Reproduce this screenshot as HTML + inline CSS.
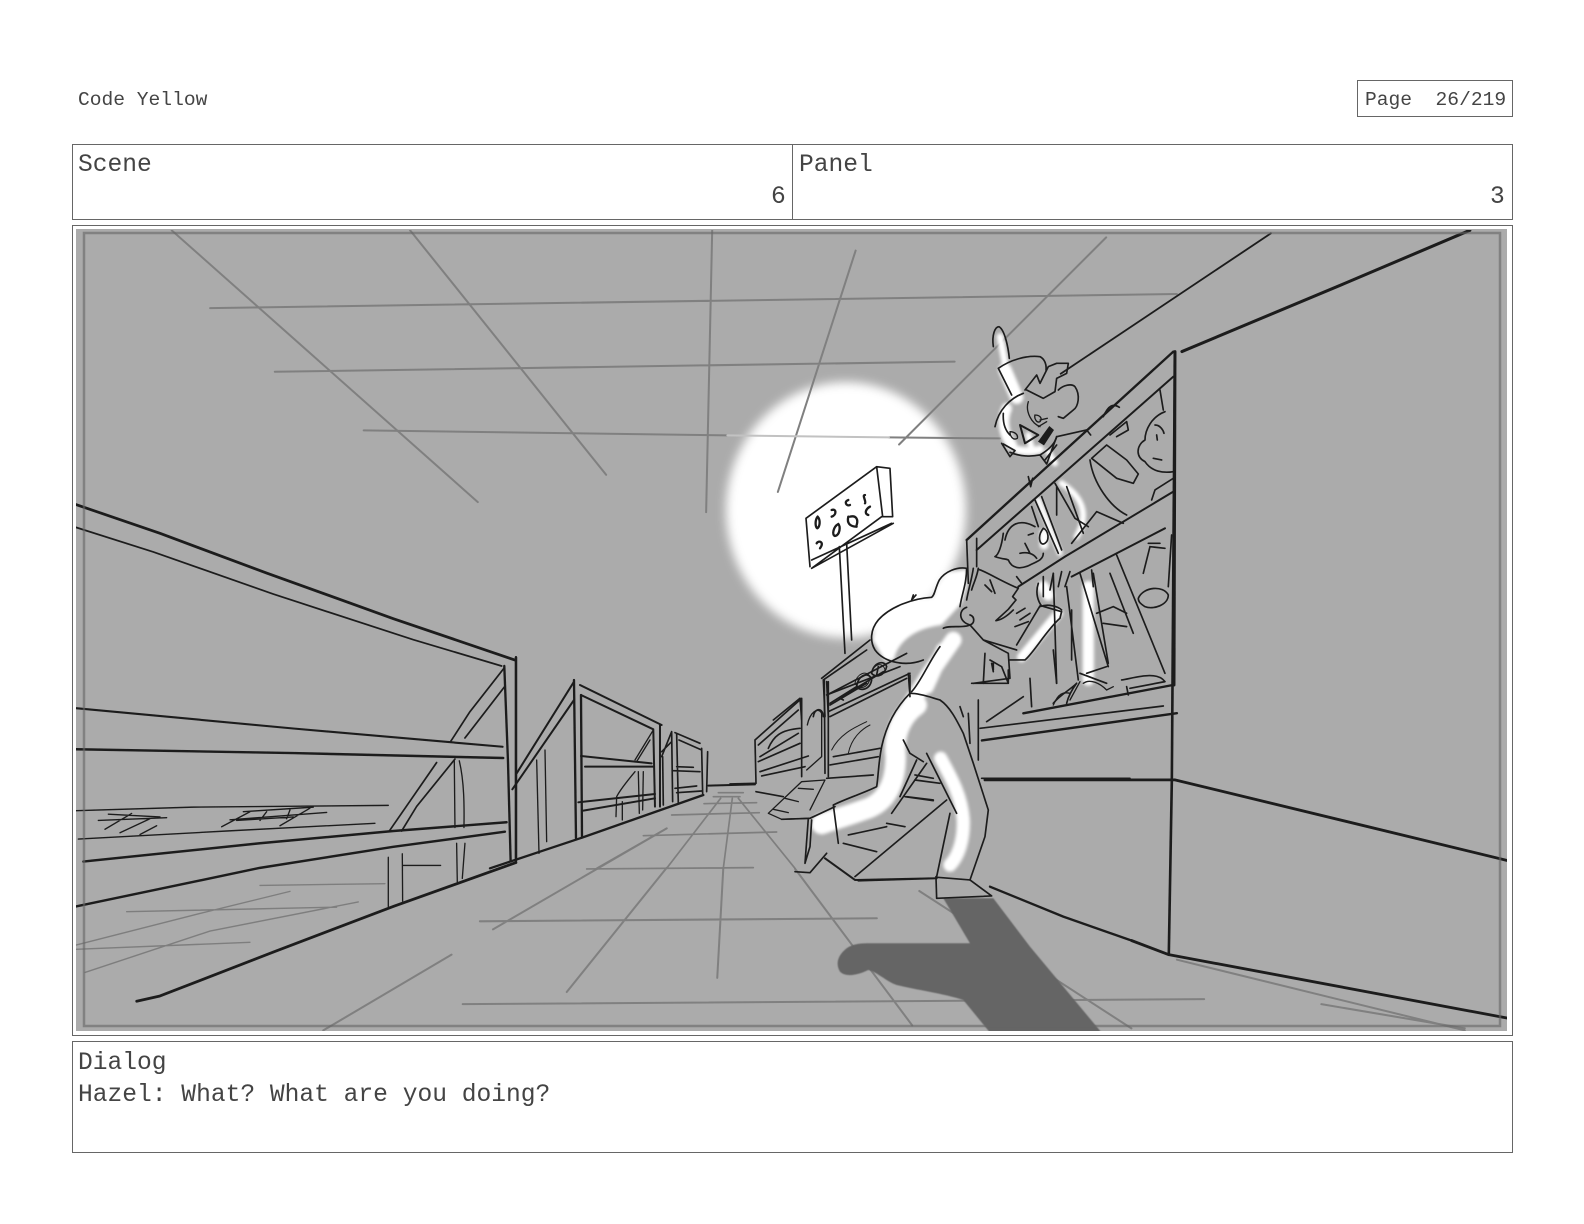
<!DOCTYPE html>
<html>
<head>
<meta charset="utf-8">
<style>
html,body{margin:0;padding:0;background:#fff;width:1584px;height:1224px;overflow:hidden}
body{position:relative;font-family:"Liberation Mono",monospace;color:#444}
.b{position:absolute;border:1.5px solid #666;box-sizing:border-box}
.t{position:absolute;white-space:pre;line-height:1;color:#444}
.s{font-size:19.6px}
.l{font-size:24.6px}
svg{position:absolute;left:0;top:0}
.k{fill:none;stroke:#1d1d1d;stroke-linecap:round;stroke-linejoin:round;stroke-width:5}
.g{fill:none;stroke:#7e7e7e;stroke-linecap:round;stroke-width:5}
.w{fill:none;stroke:#fff;stroke-linecap:round;stroke-linejoin:round}
</style>
</head>
<body>
<div class="t s" style="left:78px;top:91px">Code Yellow</div>
<div class="b" style="left:1357px;top:80px;width:156px;height:37px"></div>
<div class="t s" style="left:1365px;top:91px">Page  26/219</div>

<div class="b" style="left:72px;top:144px;width:1441px;height:76px"></div>
<div class="b" style="left:791.5px;top:144px;width:1.5px;height:76px;border-width:0 0 0 1.5px"></div>
<div class="t l" style="left:78px;top:154px">Scene</div>
<div class="t l" style="left:771px;top:186px">6</div>
<div class="t l" style="left:799px;top:154px">Panel</div>
<div class="t l" style="left:1490px;top:186px">3</div>

<div class="b" style="left:72px;top:225px;width:1441px;height:811px"></div>

<svg width="1584" height="1224" viewBox="0 0 1584 1224">
<defs>
<clipPath id="c"><rect x="76" y="229" width="1431" height="802"/></clipPath>
<filter id="bl" x="-20%" y="-20%" width="140%" height="140%"><feGaussianBlur stdDeviation="5"/></filter>
<filter id="bs" x="-20%" y="-20%" width="140%" height="140%"><feGaussianBlur stdDeviation="1.6"/></filter>
<filter id="bw" x="-30%" y="-30%" width="160%" height="160%"><feGaussianBlur stdDeviation="5"/></filter>
<filter id="sf" x="0" y="0" width="100%" height="100%"><feGaussianBlur stdDeviation=".35"/></filter>
</defs>
<rect x="76" y="229" width="1431" height="802" fill="#ababab"/>
<g clip-path="url(#c)">
<ellipse cx="846" cy="510" rx="120" ry="128" fill="#fff" filter="url(#bl)"/>

<g filter="url(#sf)">
<!-- ceiling + far floor -->
<g transform="scale(1.0102)" style="fill:none;stroke:#808080;stroke-width:2;stroke-linecap:round">
<path d="M170 228L473 497M406 228L600 470M705 228L699 507M847 248L770 487M1095 235L890 440M208 305L1165 291M272 368L945 358"/>
<path d="M360 426L720 431"/>
<path d="M880 433L990 434"/>
<path stroke="#c2c2c2" d="M720 431L880 433"/>
<path d="M475 912L868 909M458 994L1192 989M320 1020L447 945M488 920L660 820M716 859L710 968M660 859L561 982M787 860L903 1015M1165 950L1450 1020M1308 994L1450 1018M910 882L1120 1018"/>
</g>

<!-- right wall -->
<g transform="scale(1.0102)" style="fill:none;stroke:#1d1d1d;stroke-linecap:round;stroke-width:2.4">
<path stroke-width="3" d="M1455 228L1330 281L1170 348"/>
<path stroke-width="1.8" d="M1258 231L1050 370"/>
<path stroke-width="2.6" d="M1163 349L1160 772L1157 945"/>
<path stroke-width="2.8" d="M1163 772L1493 852M1157 945L1493 1008M975 772L1163 772M1120 931L1157 945"/>
<path d="M972 733L1165 706"/>
</g>

<!-- left foreground shelf -->
<g transform="translate(60 480) scale(.3333 .351)">
<path class="k" style="stroke-width:8" d="M48 70L300 152L620 265L1000 395L1365 513"/>
<path class="k" d="M48 135L280 205L640 325L1060 455L1325 530"/>
<path class="k" style="stroke-width:7" d="M1368 505L1368 1090M1333 530L1344 800L1352 1085"/>
<path class="k" style="stroke-width:6" d="M48 650L700 708L1328 760"/>
<path class="k" style="stroke-width:7" d="M48 767L700 778L1330 792"/>
<path class="k" d="M1333 535L1230 660L1172 745M1333 590L1215 735M1185 795L1070 930L1025 1000M1130 805L1050 915L988 1000"/>
<path class="k" style="stroke-width:4" d="M48 942L400 932L985 927M55 1023L500 1000L945 978"/>
<path class="k" style="stroke-width:7" d="M70 1087L600 1035L1000 1000L1340 975"/>
<path class="k" style="stroke-width:7" d="M48 1215L600 1105L1000 1045L1335 1002"/>
<path class="k" style="stroke-width:8" d="M230 1485L300 1470L640 1345L1000 1215L1368 1090"/>
<path class="k" style="stroke-width:4" d="M1183 800L1185 990M1198 800C1213 860 1213 930 1212 990M1190 1035L1192 1145M1215 1035L1207 1135M985 1075L985 1215M1027 1065L1028 1200M1030 1098L1142 1098"/>
<path class="k" style="stroke-width:4" d="M115 970L320 962M145 952L300 960M135 995L215 950M180 1005L270 965M240 1010L290 985M485 988L570 945M510 968L800 947M530 970L700 960M550 945L760 932M660 985L750 935M600 970L620 945M680 965L690 940"/>
<path class="g" style="stroke-width:4" d="M600 1155L975 1150M200 1230L830 1217M48 1325L420 1235L690 1172M75 1403L450 1285L895 1202M48 1337L570 1317"/>
</g>

<!-- distant shelves -->
<g transform="translate(480 650) scale(.3333)">
<path class="k" style="stroke-width:7" d="M108 22L108 630"/>
<path class="k" style="stroke-width:7" d="M282 90L288 565M303 135L306 560"/>
<path class="k" style="stroke-width:6" d="M300 105L545 225M303 135L520 238M282 95L110 370M282 150L97 418M540 225L540 470M520 240L525 470"/>
<path class="k" style="stroke-width:6" d="M303 318L515 340M315 350L520 350M295 457L525 432M310 482L525 445"/>
<path class="k" style="stroke-width:4" d="M520 240L465 330M510 270L470 335M465 365C440 395 420 420 410 440L408 500M427 455L427 510M475 365L478 490M490 365L488 480M170 330L177 610M195 300L200 575"/>
<path class="k" style="stroke-width:7" d="M30 655L300 565L670 435"/>
<path class="k" d="M575 245L545 320M575 275L545 305M585 248L660 280M597 270L665 300M575 245L578 455M590 250L595 460M665 295L668 430M683 305L680 425M580 362L660 365M590 350L640 352M585 415L650 408M590 428L665 423M548 320L550 465"/>
<path class="k" style="stroke-width:6" d="M685 407L825 403"/>
<path class="g" style="stroke-width:5" d="M715 428L790 428M700 440L780 440M672 461L830 458M575 495L838 488M490 557L890 546M320 657L820 653M722 445L560 655M757 445L730 655M775 445L945 655M560 535L350 655"/>
</g>

<!-- shadow -->
<g transform="translate(730 650) scale(.3333)">
<path fill="#656565" filter="url(#bs)" d="M640 745L790 745L900 890L1125 1160L790 1160L700 1050C640 1030 560 1020 500 1005C470 995 440 965 415 960C390 972 350 985 330 965C315 940 325 915 350 895C370 880 400 880 420 880L720 880Z"/>
</g>

<!-- white highlights, soft -->
<g filter="url(#bs)">
<g transform="translate(730 650) scale(.3333)">
<path class="w" style="stroke-width:62" d="M560 165C510 200 490 260 497 320C497 400 470 460 400 480C360 495 320 505 275 522"/>
<path class="w" style="stroke-width:40" d="M632 325C665 385 695 440 700 510C702 570 685 620 660 645"/>
<path class="w" style="stroke-width:44" d="M640 0L590 110"/>
</g>
<g transform="translate(700 320) scale(.3333)">
<path fill="#fff" d="M800 748L740 758L712 800L700 832L600 852L535 900L518 960L555 1022L582 1020C590 970 640 925 725 915L785 850L800 800Z"/>
<path class="w" style="stroke-width:34" d="M1030 800L1045 825"/>
<path class="w" style="stroke-width:28" d="M1075 880L965 1012"/>
<path class="w" style="stroke-width:50" d="M760 960L690 1060L610 1190"/>
<path class="w" style="stroke-width:34" d="M1165 800L1165 1080"/>
</g>
<g transform="translate(960 320) scale(.3333)">
<path class="w" style="stroke-width:20" d="M120 50L135 130"/>
<path class="w" style="stroke-width:40" d="M135 150L170 232"/>
<path class="w" style="stroke-width:32" d="M140 265C125 300 130 340 155 375"/>
<path class="w" style="stroke-width:24" d="M175 390C200 395 220 395 240 388"/>
<path class="w" style="stroke-width:18" d="M205 345L215 385"/>
<path class="w" style="stroke-width:18" d="M305 490C365 530 390 580 350 650"/>
<path class="w" style="stroke-width:16" d="M235 540L300 700"/>
<path class="w" style="stroke-width:26" d="M252 640L252 675"/>
<path class="w" style="stroke-width:18" d="M265 395L285 430"/>
</g>
</g>

<!-- Hazel lower body + right shelves -->
<g transform="translate(730 650) scale(.3333)">
<path class="k" d="M75 270L215 145L215 380M75 270L78 400M85 285L205 180M90 320L205 250M115 295C130 260 150 240 210 235M90 365L235 318M95 378L225 350M85 335L210 280"/>
<path class="k" style="stroke-width:4" d="M232 225C240 185 265 170 275 190L275 320L230 360"/>
<path class="k" d="M280 90L410 0M295 95L295 380M283 90L285 370M300 130L530 10M300 165L410 100M300 200L530 85M335 140L460 65"/>
<path class="k" style="stroke-width:3" d="M375 100C380 70 410 60 420 80C420 110 390 125 375 100M425 70C430 40 460 35 465 60C460 80 435 85 425 70M305 300C330 250 380 230 410 215M355 310C365 260 400 235 420 225"/>
<path class="k" d="M310 320L450 295M300 345L445 320M290 385L430 375M555 390L630 400M530 440L610 450"/>
<path class="k" style="stroke-width:5" d="M0 402L75 400M78 425L160 440M755 385L1200 385"/>
<path class="k" style="stroke-width:4" d="M115 490L215 395L285 390L240 480M115 490L155 508L240 505M130 478L175 488M165 445L205 455M205 415L250 418"/>
<path class="k" d="M540 130C500 170 470 220 455 290C445 340 445 380 440 410C400 430 350 445 310 465L325 580"/>
<path class="k" d="M540 130C575 130 610 145 630 150C660 170 680 210 700 250L730 340L775 480L765 560L720 690"/>
<path class="k" d="M590 310L680 490M660 490L620 680M618 680L620 745L785 738L720 690L622 682"/>
<path class="k" d="M235 505L225 640M245 510L240 590L225 640M195 665L240 668L290 610M155 508L240 505L315 470"/>
<path class="k" style="stroke-width:6" d="M285 625L375 690L620 685M385 692L620 685"/>
<path class="k" d="M375 680L650 450M520 270L540 310L580 335M560 330L510 440M590 340L485 490M555 375L610 385M525 440L610 452M470 520L525 530M340 580L440 605M355 555L470 530"/>
<path class="k" d="M540 75L540 130M715 190L720 280M745 150L745 330M690 170L700 200M900 85L905 170M970 0L980 100M770 215L880 140"/>
<path class="k" style="stroke-width:7" d="M880 190L1329 105"/>
<path class="k" style="stroke-width:5" d="M750 235L1300 168"/>
<path class="k" style="stroke-width:7" d="M780 710L1000 800L1200 870"/>
<path class="k" d="M725 100L835 100L815 50L780 30M785 40L790 65M835 100L835 60"/>
<path class="k" style="stroke-width:4" d="M970 165C985 130 1000 125 1020 130M1020 150L1050 95M1060 100C1080 85 1110 100 1130 120M1130 120L1150 110"/>
</g>

<!-- Boy, rails, kids: zoom-8 coordinates -->
<g transform="translate(960 320) scale(.3333)">
<path class="k" d="M100 80C95 45 105 20 117 20C135 30 145 85 148 115"/>
<path class="k" d="M115 145C150 120 200 105 240 110C255 118 260 135 258 150M115 145L155 225"/>
<path class="k" d="M195 210L230 165L240 190L265 140L290 130L325 130L320 160L290 175L285 215L250 235L200 210"/>
<path class="k" d="M295 210C310 195 335 190 345 200C362 225 355 260 340 270L310 295L295 290"/>
<path class="k" d="M190 220C150 235 115 270 105 320M130 280C128 310 135 330 150 345M125 370L150 410L165 392L130 372M150 397C180 410 215 410 240 405C265 390 285 370 290 350"/>
<path class="k" style="stroke-width:4" d="M205 245C195 275 215 310 240 320M225 285C240 285 248 295 240 305C230 310 222 295 225 285M240 300L262 295M235 320L260 305M150 335C165 335 175 345 172 355C160 362 150 350 150 335"/>
<path class="k" style="stroke-width:6" d="M180 315L235 345L195 370Z"/>
<path fill="#1d1d1d" d="M268 318L282 330L252 376L234 365Z"/>
<path class="k" d="M240 405L260 432L290 350L380 330L392 345M255 420L290 375M205 470L212 500L218 475"/>
<!-- rails -->
<path class="k" style="stroke-width:7" d="M640 95L20 660"/>
<path class="k" style="stroke-width:6" d="M640 170L50 690"/>
<path class="k" style="stroke-width:9" d="M645 95L642 1095"/>
<path class="k" d="M20 660L25 790M50 655L50 740"/>
<path class="k" style="stroke-width:6" d="M640 515L315 710L175 800"/>
<path class="k" style="stroke-width:6" d="M615 625L335 770"/>
<!-- other boy arm -->
<path class="k" d="M430 290C445 255 460 250 478 262M450 345L500 305L505 330L470 350M395 415L440 375L500 420L535 462L520 490L470 475L395 415M390 420C400 490 450 560 500 585"/>
<path class="k" d="M615 275C575 290 555 330 555 360C530 375 525 410 555 425C575 455 610 460 640 455M600 210L610 270M580 415L605 420M585 315C600 315 610 330 612 340M590 345L592 360"/>
<path class="k" d="M575 540L585 510L640 475M335 670L410 575L490 610"/>
<!-- central figure -->
<path class="k" d="M225 540L295 700M245 530L305 690M285 490L345 595L385 620M290 500L290 585M320 500L370 640M215 560L235 620"/>
</g>

<!-- Characters / sign: zoom-3 coordinates -->
<g transform="translate(700 320) scale(.3333)">
<!-- sign -->
<path class="k" d="M318 595L530 440L570 445L578 590L545 590L335 745M318 595L330 740M530 440L548 590M335 720L575 610M335 745L580 610"/>
<path class="k" style="stroke-width:7" d="M353 590C345 600 345 620 352 625C360 620 362 600 353 590M415 612C400 620 395 645 405 648C420 645 422 620 415 612M395 570C410 565 410 585 395 590M445 540C430 545 440 560 450 555M495 525C485 525 500 545 495 550M510 560C500 565 490 580 505 585M350 670C355 660 375 665 360 685M450 590C470 585 475 600 470 615M445 590C440 610 450 620 470 620"/>
<path class="k" d="M418 680L435 1000M440 670L455 960"/>
<!-- girl -->
<path class="k" d="M1005 620C960 595 925 610 915 660M910 640C905 680 895 705 885 710C915 720 915 715 925 720C935 745 960 750 990 735C1010 725 1030 720 1030 700M985 645L1000 640M975 670L990 700M960 700C980 695 1000 700 1010 715M1030 625C1010 650 1020 680 1035 670C1050 660 1045 630 1030 625M950 770L965 790"/>
<!-- lower figures -->
<path class="k" d="M1250 705L1395 1060M1230 760L1300 940M1345 670L1380 670M1330 760L1350 680L1395 685M1415 645L1405 800M1315 835C1330 800 1390 795 1405 825C1405 855 1360 870 1335 860C1320 850 1315 845 1315 835"/>
<path class="k" d="M1140 760L1225 1040M1180 760L1225 1030M1100 800L1130 1040L1135 1080M1175 750L1180 800M1160 1060L1220 1040M1190 880L1240 860L1280 880M1210 910L1280 920M1140 1060L1220 1090M1130 1090C1115 1110 1105 1130 1100 1150M1060 1150C1080 1125 1110 1110 1130 1090M1265 1080C1300 1075 1370 1050 1395 1085L1290 1105M1280 1100L1285 1125M1060 760L1070 1090M1115 870L1115 1020"/>
<!-- Hazel head/hair -->
<path class="k" d="M800 745C770 740 735 755 718 780C705 805 705 825 695 832C640 835 570 860 535 900C510 930 510 965 525 990C555 1030 620 1040 670 1020"/>
<path class="k" d="M800 745C800 790 785 825 780 860M820 745C815 780 805 810 800 840M835 745C830 775 820 790 815 810"/>
<path class="k" d="M835 748C860 755 905 785 955 805L938 830L948 840L925 868L888 902C905 900 925 885 940 870M800 862C775 870 775 905 810 915C825 910 825 890 810 885M870 780L885 820M855 795L875 815"/>
<path class="k" d="M730 925C745 915 790 925 810 915L850 960L950 990M850 960L925 1000L930 1075L820 1090"/>
<path class="k" d="M1015 790C1005 820 1015 845 1025 858L1085 875L1080 895C1040 930 1000 1000 975 1020L930 1020M1020 858L950 975M1030 770L1030 830M1060 760L1050 810M1085 755L1075 800M1110 755L1095 800M1020 860C1045 850 1075 860 1085 870M950 880L975 865M960 900L990 880M945 920L985 905"/>
<path class="k" d="M720 980C690 1020 660 1090 635 1115M855 1000L850 1090M880 1030L880 1050"/>
<path class="k" d="M640 825L635 840L648 825"/>
<path class="k" d="M365 1075L510 960M370 1080L375 1190M380 1085L385 1190M380 1125L600 1040M385 1175L630 1060M390 1150L470 1100M470 1100C475 1060 510 1055 515 1080C510 1110 480 1115 470 1100M515 1060C520 1025 555 1020 560 1040C555 1065 525 1075 515 1060M530 1065L535 1040M625 1060L630 1130M420 1135L430 1140"/>
<path class="k" d="M220 1200L300 1135L305 1200M340 1190C345 1160 370 1165 370 1190"/>
</g>
</g>
</g>
<rect x="84" y="233" width="1416" height="793" fill="none" stroke="#666" stroke-opacity=".6" stroke-width="2.5"/>
</svg>

<div class="b" style="left:72px;top:1041px;width:1441px;height:112px"></div>
<div class="t l" style="left:78px;top:1052px">Dialog</div>
<div class="t l" style="left:78px;top:1084px">Hazel: What? What are you doing?</div>
</body>
</html>
